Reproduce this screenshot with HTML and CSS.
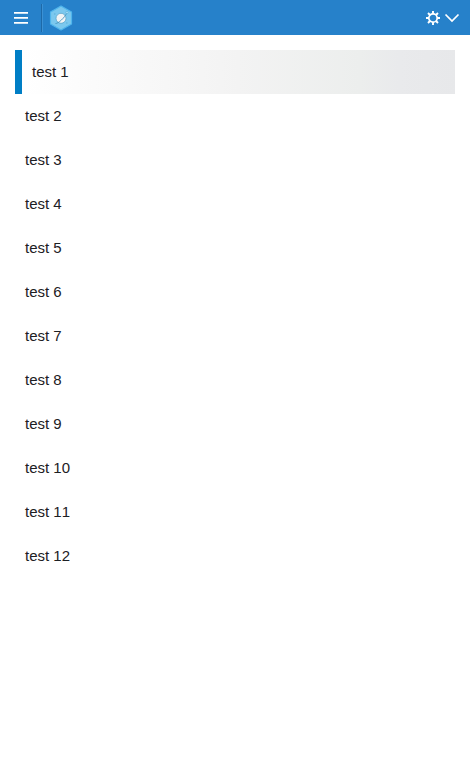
FILE: index.html
```
<!DOCTYPE html>
<html lang="en">
<head>
<meta charset="utf-8">
<title>Tests</title>
<link rel="stylesheet" href="styles.css">
</head>
<body>
<header class="bar">
  <svg class="menu" width="14" height="13" viewBox="0 0 14 13"><path d="M0 1.900h14M0 6.900h14M0 11.900h14" stroke="#fff" stroke-width="1.700"/></svg>
  <span class="divider"></span>
  <svg class="logo" width="24" height="28" viewBox="0 0 24 28">
    <path d="M12 2 22.500 8V20L12 26 1.500 20V8Z" fill="#7bc8ee" stroke="#4fb5ec" stroke-width="1.200" stroke-linejoin="round"/>
    <circle cx="12" cy="14.300" r="5" fill="#f2f4f5" stroke="#5ba6cb" stroke-width=".8"/>
    <path d="M6.500 19.500c2.500 .3 9.500-6 11.500-11" fill="none" stroke="#4593bd" stroke-width=".9"/>
    <circle cx="18" cy="8.500" r="1.200" fill="#a9def5" stroke="#4ba4d1" stroke-width=".5"/>
    <path d="M5 10h1.500M17 19h1.500" stroke="#5bafd8"/>
  </svg>
  <span class="spacer"></span>
  <svg class="gear" width="14" height="14" viewBox="0 0 14 14" fill="none" stroke="#fff" stroke-width="1.900"><circle cx="7" cy="7" r="4.200" stroke-width="1.700"/><path d="M7 0v3M7 11v3M0 7h3M11 7h3M2 2l2 2M10 10l2 2M12 2l-2 2M4 10l-2 2"/></svg>
  <svg class="chevron" width="16" height="10" viewBox="0 0 16 10"><path d="M1.500 1.500 8 8l6.500-6.500" fill="none" stroke="#fff" stroke-width="1.700"/></svg>
</header>
<ul class="list">
  <li class="item active">test 1</li>
  <li class="item">test 2</li>
  <li class="item">test 3</li>
  <li class="item">test 4</li>
  <li class="item">test 5</li>
  <li class="item">test 6</li>
  <li class="item">test 7</li>
  <li class="item">test 8</li>
  <li class="item">test 9</li>
  <li class="item">test 10</li>
  <li class="item">test 11</li>
  <li class="item">test 12</li>
</ul>
</body>
</html>
```
FILE: styles.css
```
body { margin: 0; background: #fff; color: #1d2024; font: 15px/20px "Liberation Sans", Arial, sans-serif; font-kerning: none; }
.bar { display: flex; align-items: center; box-sizing: border-box; height: 35px; padding: 0 10px 0 14px; background: #2681ca; }
.divider { width: 1px; height: 28px; margin: 0 6px 0 13px; background: #1d69a8; border-right: 1px solid #3c91d4; }
.logo { display: block; }
.spacer { flex: 1; }
.gear { margin-right: 4px; }
.list { list-style: none; margin: 0; padding: 15px; }
.item { box-sizing: border-box; height: 44px; padding: 12px 10px; }
.active { border-left: 7px solid #007ec5; background: linear-gradient(to right, #fff 0%, #f3f3f3 50%, #eceeed 78%, #e9eaec 87%, #e7e8ea 100%); }
```
